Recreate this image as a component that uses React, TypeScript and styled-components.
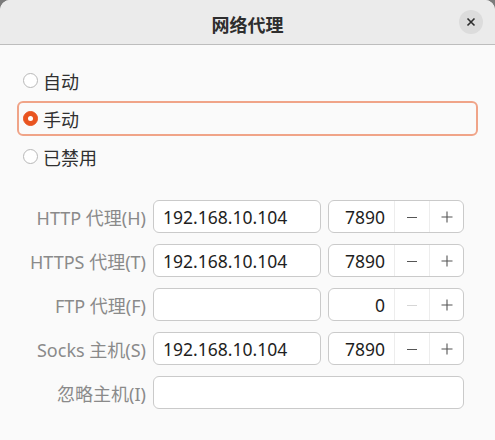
import React, { useState } from "react"
import styled, { createGlobalStyle } from "styled-components"

const GlobalStyle = createGlobalStyle`
  html, body {
    margin: 0;
    padding: 0;
    background: #7b7b7b;
  }
  body {
    font-family: "Noto Sans", "Noto Sans CJK SC", sans-serif;
  }
`

const WindowSt = styled.div`
  min-height: 100vh;
  background: #fafafa;
  border-radius: 10px 10px 0 0;
  overflow: hidden;
  display: flex;
  flex-direction: column;
`

const HeaderSt = styled.div`
  height: 44px;
  background: #ebebeb;
  border-bottom: 1px solid #bdbdbd;
  display: flex;
  align-items: center;
  justify-content: center;
  position: relative;
`

const TitleSt = styled.div`
  font-family: "Noto Sans CJK SC", sans-serif;
  font-weight: 700;
  font-size: 18px;
  color: #2e2e2e;
  margin-top: 3px;
`

const CloseButtonSt = styled.button`
  position: absolute;
  right: 12px;
  top: 10px;
  width: 24px;
  height: 24px;
  border-radius: 50%;
  border: none;
  background: #dcdcdc;
  display: flex;
  align-items: center;
  justify-content: center;
  padding: 0;
  cursor: pointer;
`

const ContentSt = styled.div`
  padding: 18px 17px 0 0;
  display: flex;
  flex-direction: column;
`

const RadioGroupSt = styled.div`
  display: flex;
  flex-direction: column;
  gap: 3px;
  margin-left: 17px;
`

const RadioRowSt = styled.label<{ $focused: boolean }>`
  height: 35px;
  box-sizing: border-box;
  border: 2px solid ${p => (p.$focused ? "#f0a488" : "transparent")};
  border-radius: 6px;
  display: flex;
  align-items: center;
  padding-left: 4px;
  gap: 5px;
  cursor: pointer;
  font-family: "Noto Sans CJK SC", sans-serif;
  font-size: 18px;
  color: #303030;
`

const RadioDotSt = styled.span<{ $checked: boolean }>`
  width: 15px;
  height: 15px;
  box-sizing: border-box;
  border-radius: 50%;
  flex-shrink: 0;
  background: ${p => (p.$checked ? "#e95420" : "#ffffff")};
  border: 1px solid ${p => (p.$checked ? "#e95420" : "#b8b8b8")};
  display: flex;
  align-items: center;
  justify-content: center;
  &::after {
    content: "";
    display: ${p => (p.$checked ? "block" : "none")};
    width: 5px;
    height: 5px;
    border-radius: 50%;
    background: #ffffff;
  }
`

const FormGridSt = styled.div`
  display: grid;
  grid-template-columns: 146px 168px 136px;
  column-gap: 7px;
  row-gap: 11px;
  margin-top: 26px;
`

const FieldLabelSt = styled.div`
  justify-self: end;
  align-self: center;
  font-size: 18px;
  color: #8a8a8a;
  white-space: nowrap;
`

const EntrySt = styled.input<{ $wide?: boolean }>`
  grid-column: ${p => (p.$wide ? "2 / 4" : "auto")};
  height: 33px;
  box-sizing: border-box;
  border: 1px solid #cacaca;
  border-radius: 6px;
  background: #ffffff;
  padding: 0 9px;
  font-family: "Noto Sans", sans-serif;
  font-size: 17.5px;
  color: #1e1e1e;
  outline: none;
  min-width: 0;
`

const SpinSt = styled.div`
  height: 33px;
  box-sizing: border-box;
  border: 1px solid #cacaca;
  border-radius: 6px;
  background: #ffffff;
  display: grid;
  grid-template-columns: 1fr 35px 34px;
  overflow: hidden;
`

const SpinValueSt = styled.div`
  display: flex;
  align-items: center;
  justify-content: flex-end;
  padding-right: 9px;
  font-size: 17.5px;
  color: #1e1e1e;
`

const SpinButtonSt = styled.button<{ $disabled?: boolean }>`
  border: none;
  border-left: 1px solid #ededed;
  background: transparent;
  padding: 0;
  display: flex;
  align-items: center;
  justify-content: center;
  color: ${p => (p.$disabled ? "#d6d6d6" : "#555555")};
  cursor: ${p => (p.$disabled ? "default" : "pointer")};
`

const MinusIcon = () => (
  <svg width="12" height="12" viewBox="0 0 12 12">
    <path d="M1 6.5h10" stroke="currentColor" strokeWidth="1.1" />
  </svg>
)

const PlusIcon = () => (
  <svg width="12" height="12" viewBox="0 0 12 12">
    <path d="M0.5 6h11M6 0.5v11" stroke="currentColor" strokeWidth="1.1" />
  </svg>
)

interface ProxyRow {
  label: string
  host: string
  port: number
}

const proxyRows: ProxyRow[] = [
  { label: "HTTP 代理(H)", host: "192.168.10.104", port: 7890 },
  { label: "HTTPS 代理(T)", host: "192.168.10.104", port: 7890 },
  { label: "FTP 代理(F)", host: "", port: 0 },
  { label: "Socks 主机(S)", host: "192.168.10.104", port: 7890 },
]

const modes = ["自动", "手动", "已禁用"]

export default function App() {
  const [mode, setMode] = useState(1)

  return <>
    <GlobalStyle />
    <WindowSt>
      <HeaderSt>
        <TitleSt>网络代理</TitleSt>
        <CloseButtonSt aria-label="关闭">
          <svg width="10" height="10" viewBox="0 0 10 10">
            <path d="M1.5 1.5l7 7M8.5 1.5l-7 7" stroke="#2e2e2e" strokeWidth="1.6" />
          </svg>
        </CloseButtonSt>
      </HeaderSt>
      <ContentSt>
        <RadioGroupSt>
          {modes.map((m, idx) =>
            <RadioRowSt key={m} $focused={idx === mode} onClick={() => setMode(idx)}>
              <RadioDotSt $checked={idx === mode} />
              {m}
            </RadioRowSt>
          )}
        </RadioGroupSt>
        <FormGridSt>
          {proxyRows.map(r => <React.Fragment key={r.label}>
            <FieldLabelSt>{r.label}</FieldLabelSt>
            <EntrySt defaultValue={r.host} />
            <SpinSt>
              <SpinValueSt>{r.port}</SpinValueSt>
              <SpinButtonSt $disabled={r.port <= 0}><MinusIcon /></SpinButtonSt>
              <SpinButtonSt><PlusIcon /></SpinButtonSt>
            </SpinSt>
          </React.Fragment>)}
          <FieldLabelSt>忽略主机(I)</FieldLabelSt>
          <EntrySt $wide />
        </FormGridSt>
      </ContentSt>
    </WindowSt>
  </>
}
